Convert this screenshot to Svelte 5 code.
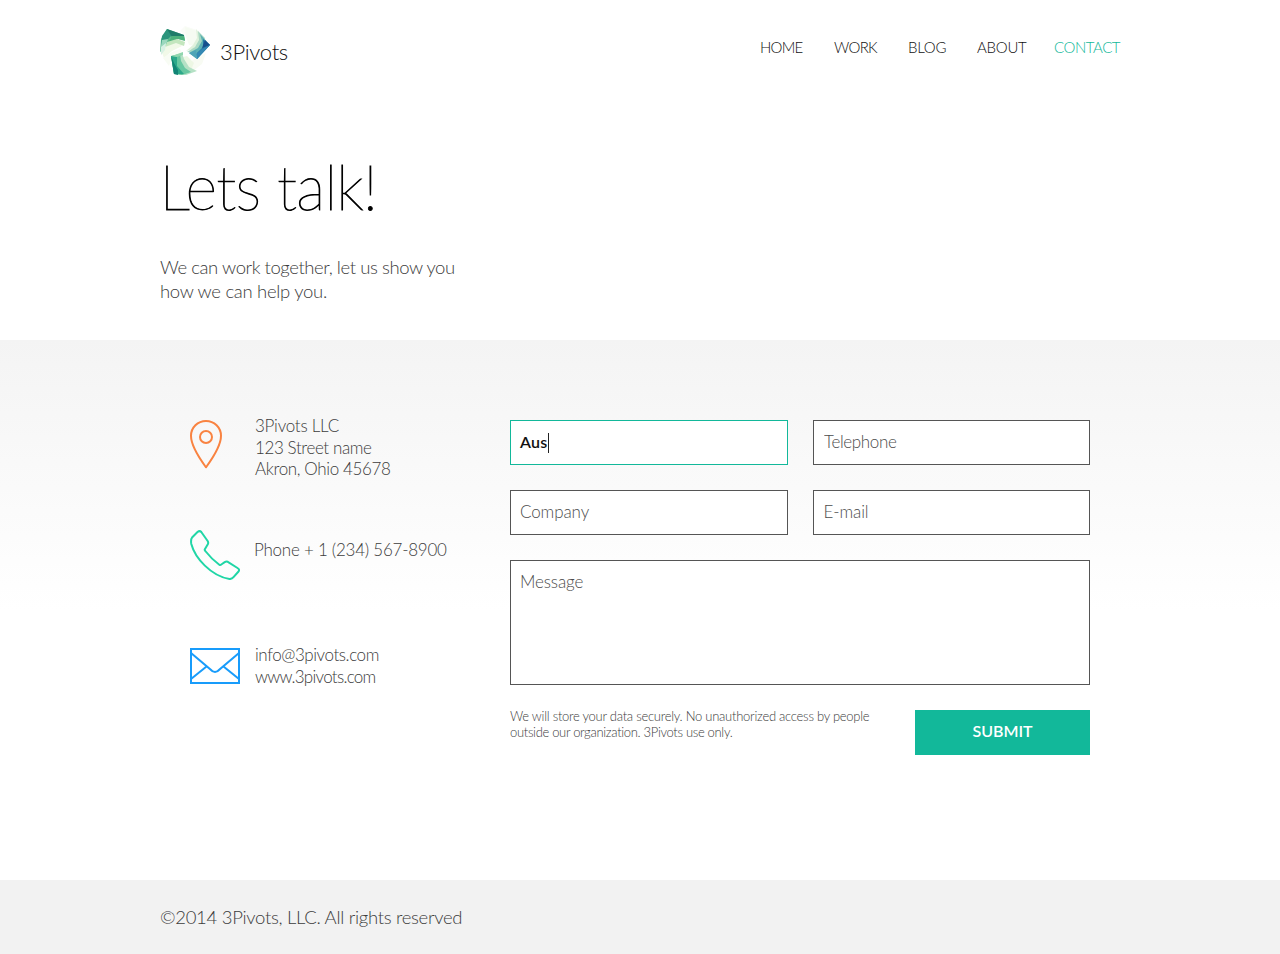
<script>
  const nav = [
    { label: 'HOME', width: 74, tracking: -0.75 },
    { label: 'WORK', width: 74, tracking: -0.7 },
    { label: 'BLOG', width: 69, tracking: -0.3 },
    { label: 'ABOUT', width: 77, tracking: -0.25 },
    { label: 'CONTACT', width: 66, tracking: -0.45, active: true }
  ];
  const intro = [
    { text: 'We can work together, let us show you', tracking: -0.43 },
    { text: 'how we can help you.', tracking: -0.3 }
  ];
  const address = [
    { text: '3Pivots LLC', tracking: -0.25 },
    { text: '123 Street name', tracking: -0.4 },
    { text: 'Akron, Ohio 45678', tracking: -0.36 }
  ];
  const online = [
    { text: 'info@3pivots.com', tracking: -0.43 },
    { text: 'www.3pivots.com', tracking: -0.72 }
  ];
  const notice = [
    { text: 'We will store your data securely. No unauthorized access by people', tracking: -0.26 },
    { text: 'outside our organization. 3Pivots use only.', tracking: -0.32 }
  ];
</script>

{#snippet lines(items)}
  {#each items as item}
    <span class="line" style="letter-spacing: {item.tracking}px">{item.text}</span>
  {/each}
{/snippet}

<div class="page">
  <header class="wrap">
    <a class="brand" href="#home">
      <svg width="50" height="50" viewBox="0 0 50 50">
        <path d="M20 6 25 1 37 5 37 11 29 13 25 10Z" fill="#fafcf7" />
        <path d="M25 2 37 6 41 15 36 21 29 20 26 12Z" fill="#f6fbf2" />
        <path d="M1 25 8 19 19 17 22 21 12 26 4 33Z" fill="#f1f9e8" />
        <path d="M3 33 12 27 20 24 22 28 12 32 9 41Z" fill="#f8fcf4" />
        <path d="M24 40 31 36 46 28 42 39 33 46 22 49Z" fill="#f8fbf3" />
        <path d="M23 32 27 31 34 38 31 45 22 49Z" fill="#edf7e4" />
        <path d="M7 4 24 10 25 15 18 14 7 19 0 27 1 14Z" fill="#5dbb8f" />
        <path d="M7 4 13 9 8 14 1 20 2 11Z" fill="#2b947c" />
        <path d="M7 4 24 10 24 14 12 12Z" fill="#1d7c69" />
        <path d="M12 11 24 11 25 16 18 14 8 18Z" fill="#4bb27b" />
        <path d="M7 17 17 14 25 17 24 21 16 18 5 22Z" fill="#c3e6be" />
        <path d="M2 15 8 14 6 20 0 27Z" fill="#9bd8bd" />
        <path d="M1 22 6 18 5 25 1 30Z" fill="#d9f1e4" />
        <path d="M36 4 42 11 38 19 33 24 26 26 33 20 37 13Z" fill="#dff1dc" />
        <path d="M38 6 45 13 42 22 35 28 27 27 35 22 39 15Z" fill="#a8d8c2" />
        <path d="M40 9 50 20 37 34 29 28 38 23 42 16Z" fill="#5cb1b3" />
        <path d="M43 14 50 20 37 34 37 28 43 22Z" fill="#2676a4" />
        <path d="M45 15 50 20 42 23Z" fill="#174f8d" />
        <path d="M50 20 42 24 36 29 37 34Z" fill="#3489b4" />
        <path d="M29 28 36 25 37 34Z" fill="#4fa5b7" />
        <path d="M11 31 22 28 24 34 29 42 37 46 26 50 14 49Z" fill="#b5e1c5" />
        <path d="M11 31 20 29 21 36 25 43 31 47 22 50 14 49Z" fill="#68c7a1" />
        <path d="M11 31 17 32 17 41 24 49 14 49Z" fill="#2ca88a" />
        <path d="M11 31 14 38 18 45 18 50 14 49Z" fill="#128475" />
        <path d="M12 31 23 27 23 30 17 32Z" fill="#91d6ae" />
      </svg>
      <span>3Pivots</span>
    </a>
    <nav>
      {#each nav as item}
        <a href="#{item.label.toLowerCase()}" class:active={item.active} style="width: {item.width}px; letter-spacing: {item.tracking}px">{item.label}</a>
      {/each}
    </nav>
  </header>

  <section class="wrap hero">
    <h1>Lets talk!</h1>
    <p>{@render lines(intro)}</p>
  </section>

  <main>
    <div class="wrap contact">
      <ul class="details">
        <li class="place">
          <svg width="50" height="50" viewBox="0 0 50 50" fill="none" stroke="#f98341" stroke-width="2">
            <path d="M16 47.300C12.500 42.500 1 27 1 15.800a15 14.800 0 0 1 30 0C31 27 19.500 42.500 16 47.300Z" stroke-linejoin="round" />
            <circle cx="16" cy="17" r="6" />
          </svg>
          <p>{@render lines(address)}</p>
        </li>
        <li class="phone">
          <svg width="50" height="50" viewBox="0 0 50 50" fill="none" stroke="#20d6a6" stroke-width="2" stroke-linejoin="round">
            <path d="M2.300 7.200 7.500 2Q9.700 0.300 11.300 2L17.800 11.300Q18.600 12.700 17.800 14.300L14.700 19.400Q14.600 20.300 15.300 21Q21.500 29 29.300 34.700Q30.300 35.400 31.300 34.500L34.700 32.200Q36.200 31.300 37.800 31.800L47.500 38Q50 39.500 48.500 41.500L43.500 47.200Q41.800 49.200 39.500 49C21 46 5 28 1.300 14Q0.500 9.500 2.300 7.200Z" />
          </svg>
          <p><span class="line tight">Phone + 1 (234) 567-8900</span></p>
        </li>
        <li class="mail">
          <svg width="50" height="36" viewBox="0 0 50 36" fill="none" stroke="#189cfb" stroke-width="2">
            <rect x="1" y="1" width="48" height="34" />
            <path d="M1 5 20.500 21.500Q25 26.500 29.500 21.500L49 5M1 31 16.500 18.500M49 31 33.500 18.500" />
          </svg>
          <p>{@render lines(online)}</p>
        </li>
      </ul>

      <form>
        <div class="field focused"><span>Aus</span><i></i></div>
        <input class="telephone" placeholder="Telephone" />
        <input class="company" placeholder="Company" />
        <input class="email" placeholder="E-mail" />
        <textarea placeholder="Message"></textarea>
        <div class="actions">
          <p>{@render lines(notice)}</p>
          <button type="button">SUBMIT</button>
        </div>
      </form>
    </div>
  </main>

  <footer>
    <div class="wrap">©2014 3Pivots, LLC. All rights reserved</div>
  </footer>
</div>

<style>
  :global(body) { margin: 0; background: #fff; }
  * { box-sizing: border-box; }
  .page {
    display: flex;
    flex-direction: column;
    height: 954px;
    overflow: hidden;
    font-family: Lato, "Liberation Sans", sans-serif;
    font-weight: 300;
    color: #3c3c3c;
  }
  .wrap { width: 960px; margin: 0 auto; }
  a { color: #111; text-decoration: none; }
  p, h1, ul { margin: 0; padding: 0; }
  .line { display: block; white-space: nowrap; }

  header { display: flex; justify-content: space-between; height: 120px; padding-top: 25px; }
  .brand { display: flex; gap: 10px; height: 50px; font-size: 22px; line-height: 54px; letter-spacing: -0.3px; }
  nav { display: flex; width: 360px; padding-top: 12px; font-size: 15px; line-height: 20px; }
  nav a { flex: none; white-space: nowrap; }
  nav a.active { color: #12b89a; }

  .hero { height: 220px; padding-top: 29px; }
  h1 { font-size: 61px; line-height: 76px; font-weight: 100; letter-spacing: -0.75px; color: #000; -webkit-text-stroke: 0.9px #000; margin-left: -0.5px; }
  .hero p { margin-top: 30px; font-size: 18.5px; line-height: 24px; }

  main { height: 540px; background: linear-gradient(#f4f4f4, #fff 270px); }
  .contact { display: grid; grid-template-columns: 320px 580px; padding: 80px 30px 0; }
  .details { list-style: none; font-size: 17px; line-height: 21.600px; }
  .details li { display: flex; gap: 15px; }
  .details svg { flex: none; display: block; }
  .place { height: 110px; }
  .place p { margin-top: -5px; }
  .phone { height: 118px; }
  .phone p { margin: 9px 0 0 -1px; }
  .tight { letter-spacing: -0.25px; }
  .mail p { margin-top: -4px; }

  form { display: grid; grid-template-columns: 278px 277px; gap: 25px; }
  input, textarea, .field {
    display: block;
    width: 100%;
    height: 45px;
    margin: 0;
    padding: 0 9px 2px;
    border: 1px solid #555;
    border-radius: 0;
    background: #fff;
    font: 300 17px Lato, sans-serif;
    color: #3c3c3c;
    outline: 0;
    resize: none;
  }
  ::placeholder { color: #4c4c4c; opacity: 1; }
  .telephone { letter-spacing: -0.35px; padding-left: 10px; }
  .company { letter-spacing: -0.1px; }
  .email { letter-spacing: -0.1px; padding-left: 9.5px; }
  textarea { grid-column: span 2; height: 125px; padding: 9px; line-height: 24px; letter-spacing: -0.15px; }
  .field { display: flex; align-items: center; padding-bottom: 0; border-color: #12b89a; }
  .field span { margin-top: -2px; font-size: 16px; font-weight: 600; color: #111; letter-spacing: 0.3px; }
  .field i { width: 1px; height: 20px; background: #222; }
  .actions { grid-column: span 2; display: flex; justify-content: space-between; font-size: 13px; line-height: 16px; }
  .actions p { margin-top: -2px; }
  button {
    width: 175px;
    height: 45px;
    padding: 0 0 4px;
    border: 0;
    background: #12b89a;
    color: #fff;
    font: 600 16px Lato, sans-serif;
  }

  footer { height: 74px; background: #f2f2f2; font-size: 18.5px; line-height: 74px; letter-spacing: -0.3px; }
</style>
